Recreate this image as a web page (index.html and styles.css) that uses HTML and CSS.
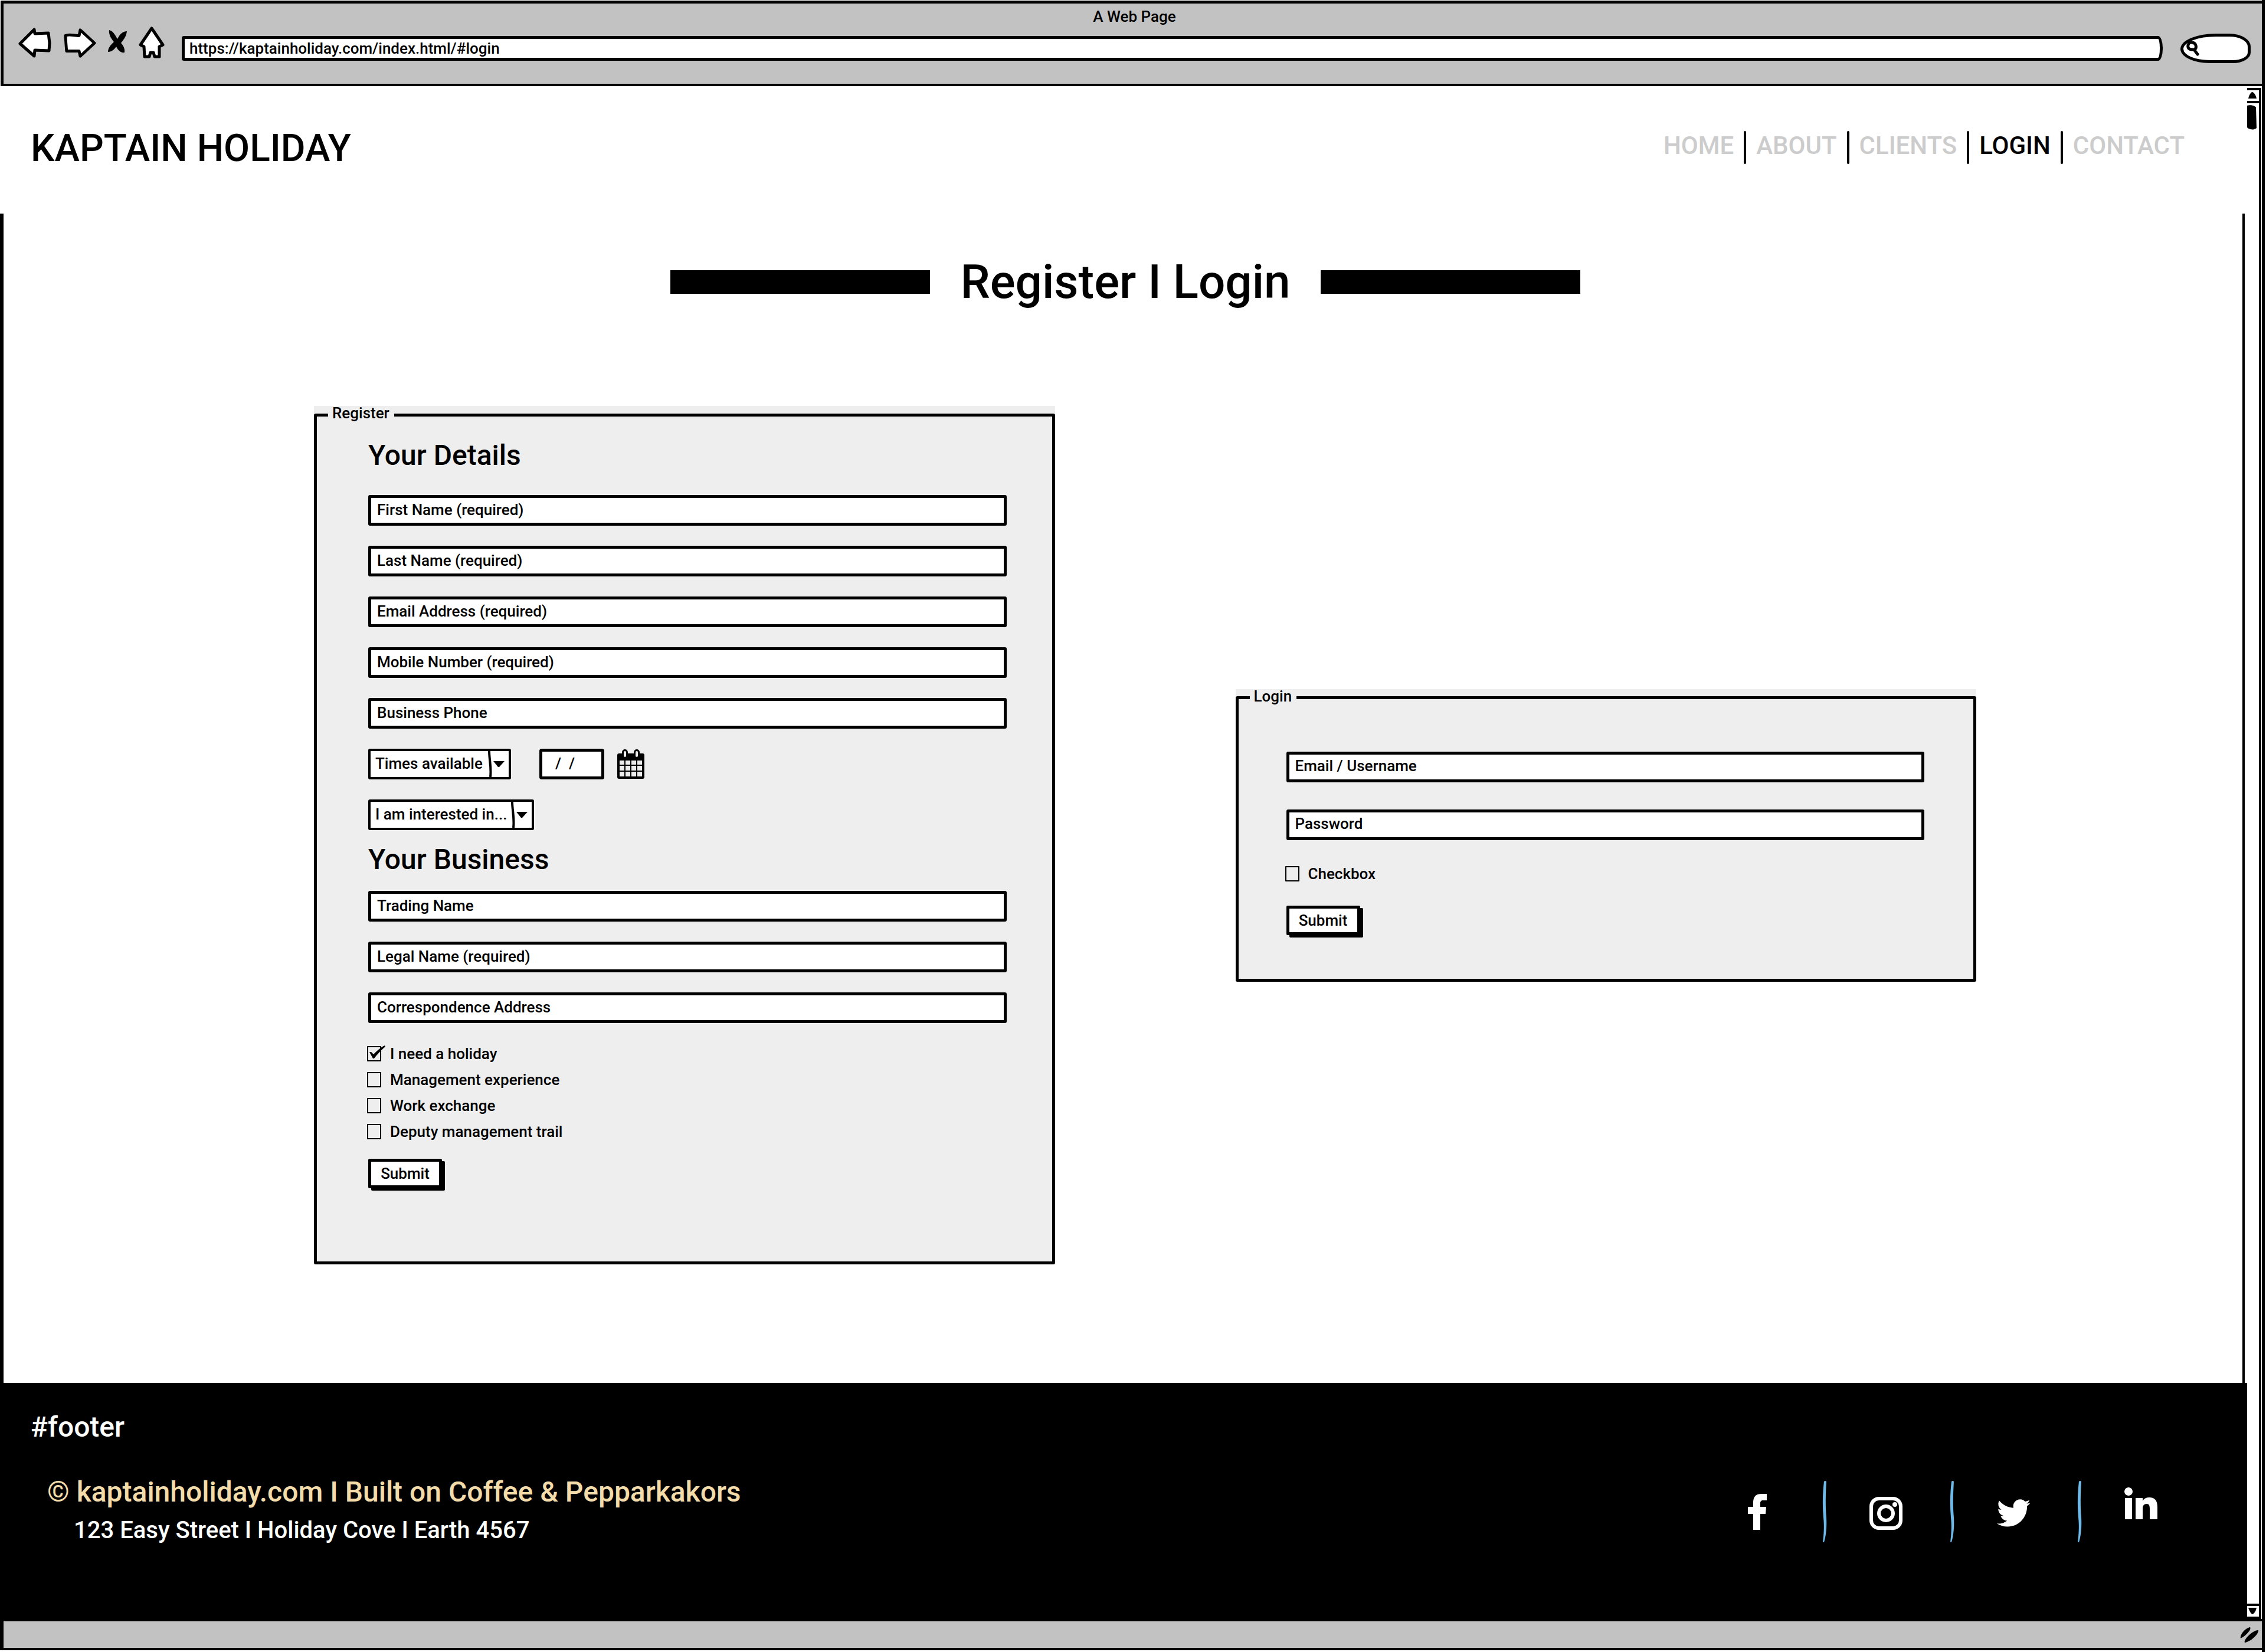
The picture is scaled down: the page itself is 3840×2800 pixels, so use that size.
FILE: index.html
```html
<!DOCTYPE html>
<html lang="en">
<head>
<meta charset="utf-8">
<meta name="viewport" content="width=device-width, initial-scale=1">
<title>Kaptain Holiday - Register | Login</title>
<link rel="stylesheet" href="styles.css">
</head>
<body>
<div class="window">
  <div class="chrome">
    <div class="chrome-title">A Web Page</div>
    <div class="toolbar">
      <div class="tools">
        <button class="tool" type="button" aria-label="Back"><svg width="56" height="56" viewBox="0 0 56 56"><path class="ink-line" d="M3 30 27 6 28 13 51 12 53 29 52 42 28 41 27 51Z"/></svg></button>
        <button class="tool" type="button" aria-label="Forward"><svg width="56" height="56" viewBox="0 0 58 56"><path class="ink-line" d="M4 16C12 12 20 17 28 16L30 6 55 29 30 52 28 43 6 43 5 30Z"/></svg></button>
        <button class="tool" type="button" aria-label="Stop"><svg width="32" height="56" viewBox="0 0 32 56"><path d="M2 7C8 8 12 15 16 22 20 14 25 9 32 9 31 18 26 24 22 29 26 33 29 39 28 45 21 46 17 41 14 35 10 41 5 44 0 44 0 36 6 31 10 27 5 21 1 14 2 7Z"/></svg></button>
        <button class="tool" type="button" aria-label="Home"><svg width="44" height="56" viewBox="0 0 44 56"><path class="ink-line" d="M22 4 41 32 35 35 35 52 27 52 25 45 20 45 18 52 10 52 9 35 3 32Z"/></svg></button>
      </div>
      <input class="address" type="text" aria-label="Address" value="https://kaptainholiday.com/index.html/#login">
      <label class="search">
        <svg width="22" height="26" viewBox="0 0 22 26"><path d="M10 3C5 2 2 6 3 11 4 15 8 15 14 15 18 12 17 4 10 3ZM13 15 19 23" fill="none" stroke="#000" stroke-width="5" stroke-linecap="round"/></svg>
        <input type="search" aria-label="Search">
      </label>
    </div>
  </div>

  <div class="viewport">
    <div class="page">
      <header class="site-header">
        <div class="logo">KAPTAIN HOLIDAY</div>
        <nav class="site-nav">
          <a href="#home">HOME</a><span class="bar"></span>
          <a href="#about">ABOUT</a><span class="bar"></span>
          <a href="#clients">CLIENTS</a><span class="bar"></span>
          <a class="current" href="#login">LOGIN</a><span class="bar"></span>
          <a href="#contact">CONTACT</a>
        </nav>
      </header>

      <main class="content">
        <h1 class="headline">Register I Login</h1>

        <div class="forms">
          <form class="panel">
            <fieldset>
              <legend>Register</legend>
              <div class="panel-body">
                <h2>Your Details</h2>
                <div class="fields">
                  <input class="field" type="text" aria-label="First Name" placeholder="First Name (required)">
                  <input class="field" type="text" aria-label="Last Name" placeholder="Last Name (required)">
                  <input class="field" type="email" aria-label="Email Address" placeholder="Email Address (required)">
                  <input class="field" type="tel" aria-label="Mobile Number" placeholder="Mobile Number (required)">
                  <input class="field" type="tel" aria-label="Business Phone" placeholder="Business Phone">
                  <div class="when">
                    <div class="choice choice-times">
                      <select aria-label="Times available"><option>Times available</option></select>
                      <svg width="38" height="44" viewBox="0 0 38 44"><path d="M5 0C5 14 9 28 7 44" fill="none" stroke="#000" stroke-width="4"/><path d="M12 17H31L22 27H20Z"/></svg>
                    </div>
                    <input class="date" type="text" aria-label="Date" value="/ &nbsp;/">
                    <button class="calendar" type="button" aria-label="Open calendar"><svg width="46" height="50" viewBox="0 0 46 50"><rect y="7" width="46" height="43" rx="3"/><path d="M4 19H12V26H4ZM14 19H22V26H14ZM24 19H32V26H24ZM34 19H42V26H34ZM4 28H12V36H4ZM14 28H22V36H14ZM24 28H32V36H24ZM34 28H42V36H34ZM4 38H12V46H4ZM14 38H22V46H14ZM24 38H32V46H24ZM34 38H42V46H34Z" fill="#eee"/><path d="M13 5V10M33 5V10" stroke="#000" stroke-width="10" stroke-linecap="round"/><path d="M13 5V11M33 5V11" stroke="#eee" stroke-width="4" stroke-linecap="round"/></svg></button>
                  </div>
                  <div class="choice choice-interest">
                    <select aria-label="I am interested in"><option>I am interested in...</option></select>
                    <svg width="38" height="44" viewBox="0 0 38 44"><path d="M5 0C5 14 9 28 7 44" fill="none" stroke="#000" stroke-width="4"/><path d="M12 17H31L22 27H20Z"/></svg>
                  </div>
                </div>
                <h2 class="second">Your Business</h2>
                <div class="fields">
                  <input class="field" type="text" aria-label="Trading Name" placeholder="Trading Name">
                  <input class="field" type="text" aria-label="Legal Name" placeholder="Legal Name (required)">
                  <input class="field" type="text" aria-label="Correspondence Address" placeholder="Correspondence Address">
                </div>
                <div class="checks">
                  <label class="check"><input type="checkbox" checked><svg class="tick" width="32" height="26" viewBox="0 0 32 26"><path d="M4 11 7 11 11 15C16 10 23 3 30 0L31 2C25 7 18 14 12 22L10 22Z"/></svg>I need a holiday</label>
                  <label class="check"><input type="checkbox">Management experience</label>
                  <label class="check"><input type="checkbox">Work exchange</label>
                  <label class="check"><input type="checkbox">Deputy management trail</label>
                </div>
                <button class="submit" type="button">Submit</button>
              </div>
            </fieldset>
          </form>

          <form class="panel panel-login">
            <fieldset>
              <legend>Login</legend>
              <div class="panel-body">
                <div class="fields">
                  <input class="field" type="text" aria-label="Email or username" placeholder="Email / Username">
                  <input class="field" type="password" aria-label="Password" placeholder="Password">
                </div>
                <div class="checks">
                  <label class="check"><input type="checkbox">Checkbox</label>
                </div>
                <button class="submit" type="button">Submit</button>
              </div>
            </fieldset>
          </form>
        </div>
      </main>

      <footer class="site-footer">
        <div class="about">
          <div class="anchor">#footer</div>
          <div class="copyright">© kaptainholiday.com I Built on Coffee &amp; Pepparkakors</div>
          <address>123 Easy Street I Holiday Cove I Earth 4567</address>
        </div>
        <div class="social">
          <a href="#facebook" aria-label="Facebook"><svg width="56" height="105" viewBox="0 0 56 105"><path d="M19 83V56H10V44H19V37C19 26 24 22 33 22H42V33H36C32 33 31 35 31 38V44H41L40 56H31V83Z"/></svg></a>
          <svg class="wave" width="8" height="105" viewBox="0 0 8 105"><path d="M3 1Q5-1 7 1C6 18 5 40 7 62 8 80 6 95 3 104L1 104C2 95 4 80 2 62 0 40 1 18 3 1Z"/></svg>
          <a href="#instagram" aria-label="Instagram"><svg width="56" height="105" viewBox="0 0 56 105"><g fill="none" stroke="#fff" stroke-width="6"><rect x="3" y="30" width="50" height="50" rx="13"/><circle cx="28" cy="55" r="12"/></g><circle cx="43" cy="40" r="4"/></svg></a>
          <svg class="wave" width="8" height="105" viewBox="0 0 8 105"><path d="M3 1Q5-1 7 1C6 18 5 40 7 62 8 80 6 95 3 104L1 104C2 95 4 80 2 62 0 40 1 18 3 1Z"/></svg>
          <a href="#twitter" aria-label="Twitter"><svg width="56" height="105" viewBox="0 0 56 105"><path transform="translate(0 26) scale(.111)" d="M459.37 151.716c.325 4.548.325 9.097.325 13.645 0 138.72-105.583 298.558-298.558 298.558-59.452 0-114.68-17.219-161.137-47.106 8.447.974 16.568 1.299 25.34 1.299 49.055 0 94.213-16.568 130.274-44.832-46.132-.975-84.792-31.188-98.112-72.772 6.498.974 12.995 1.624 19.818 1.624 9.421 0 18.843-1.3 27.614-3.573-48.081-9.747-84.143-51.98-84.143-102.985v-1.299c13.969 7.797 30.214 12.67 47.431 13.319-28.264-18.843-46.781-51.005-46.781-87.391 0-19.492 5.197-37.36 14.294-52.954 51.655 63.675 129.3 105.258 216.365 109.807-1.624-7.797-2.599-15.918-2.599-24.04 0-57.828 46.782-104.934 104.934-104.934 30.213 0 57.502 12.67 76.67 33.137 23.715-4.548 46.456-13.32 66.599-25.34-7.798 24.366-24.366 44.833-46.132 57.827 21.117-2.273 41.584-8.122 60.426-16.243-14.292 20.791-32.161 39.308-52.628 54.253z"/></svg></a>
          <svg class="wave" width="8" height="105" viewBox="0 0 8 105"><path d="M3 1Q5-1 7 1C6 18 5 40 7 62 8 80 6 95 3 104L1 104C2 95 4 80 2 62 0 40 1 18 3 1Z"/></svg>
          <a href="#linkedin" aria-label="LinkedIn"><svg width="56" height="105" viewBox="0 0 56 105"><circle cx="7" cy="18" r="7"/><path d="M1 29H13V65H1ZM19 29H31V34C33 30 37 28 42 28 53 28 56 35 56 45V65H43V47C43 42 42 39 38 39 33 39 31 42 31 47V65H19Z"/></svg></a>
        </div>
      </footer>
    </div>

    <div class="scrollbar" aria-hidden="true">
      <div class="scroll-step"><svg width="16" height="14" viewBox="0 0 16 14"><path d="M2 12C3 7 6 1 9 1 12 2 15 7 16 12Z"/></svg></div>
      <svg class="thumb" width="16" height="42" viewBox="0 0 16 42"><path d="M0 1C6-1 13 1 15 4L16 39C11 43 4 42 0 38Z"/></svg>
      <div class="scroll-step scroll-down"><svg width="16" height="14" viewBox="0 0 16 14"><path d="M2 1H16C15 6 12 11 9 12 6 11 4 6 2 1Z"/></svg></div>
    </div>
  </div>

  <div class="status">
    <svg width="34" height="28" viewBox="0 0 34 28"><path d="M2 20C0 14 10 2 18 1 21 5 10 16 2 20ZM9 27C6 22 24 5 32 6 33 13 18 26 9 27Z"/></svg>
  </div>
</div>
</body>
</html>
```
FILE: styles.css
```css
* { box-sizing: border-box; }

body {
  margin: 0;
  background: #fff;
  color: #000;
  font: 500 26px/32px Roboto, "Liberation Sans", sans-serif;
}

input, select, button { font: inherit; color: inherit; margin: 0; }
button { cursor: pointer; }
a { color: inherit; text-decoration: none; }
svg { display: block; }

/* Browser frame */
.window {
  display: flex;
  flex-direction: column;
  min-height: 100vh;
  padding: 1px 0 3px;
  margin-right: 2px;
  border-right: 5px solid #000;
}

.chrome {
  background: #c2c2c2;
  border: solid #000;
  border-width: 5px 0 4px 5px;
  margin-left: 1px;
  padding: 6px 19px 35px 25px;
}

.chrome-title { text-align: center; }

.toolbar {
  display: flex;
  align-items: flex-end;
  height: 63px;
}

.tools { display: flex; gap: 20px; align-self: flex-start; }
.tool { padding: 0; border: 0; background: none; }
.ink-line { fill: #fff; stroke: #000; stroke-width: 5; stroke-linejoin: round; }

.address {
  flex: 1;
  min-width: 0;
  height: 42px;
  margin: 0 30px 4px 29px;
  padding: 0 8px;
  background: #fff;
  border: 5px solid #000;
  border-radius: 4px 8px 8px 4px / 4px 20px 20px 4px;
}

.search {
  display: flex;
  align-items: center;
  width: 119px;
  height: 50px;
  padding: 0 5px;
  background: #fff;
  border: 5px solid #000;
  border-radius: 60px 36px 30px 50px / 26px 22px 18px 24px;
}
.search input { flex: 1; min-width: 0; border: 0; padding: 0; background: none; outline: 0; }

.viewport { flex: 1; display: flex; }
.page { flex: 1; min-width: 0; display: flex; flex-direction: column; }

/* Header */
.site-header {
  display: flex;
  justify-content: space-between;
  align-items: flex-start;
  height: 216px;
  padding: 66px 106px 0 52px;
}
.logo { font-size: 64px; line-height: 80px; }

.site-nav {
  display: flex;
  gap: 17px;
  padding-top: 10px;
  font-size: 42px;
  line-height: 50px;
  color: #ccc;
}
.site-nav .current { color: #000; }
.bar { width: 4px; height: 56px; background: #000; border-radius: 2px; }

/* Main */
.content {
  flex: 1;
  margin-right: 4px;
  padding: 68px 0 201px;
  border: solid #000;
  border-width: 0 4px 0 6px;
}

.headline {
  display: flex;
  justify-content: center;
  align-items: center;
  gap: 51px;
  margin: 0 0 162px;
  padding-left: 8px;
  font-size: 80px;
  font-weight: 500;
  line-height: 96px;
}
.headline::before, .headline::after {
  content: "";
  width: 440px;
  height: 40px;
  background: #000;
}

.forms {
  display: grid;
  grid-template-columns: 1fr 1fr;
  align-items: center;
  gap: 306px;
  padding: 0 451px 0 526px;
}

.panel { background: #eee; --left: 68px; --right: 77px; }

fieldset {
  min-width: 0;
  margin: 0;
  padding: 0 0 0 19px;
  border: 5px solid #000;
  border-radius: 3px;
}
legend { padding: 0 8px 6px 7px; line-height: 24px; }

.panel-body { padding: 26px var(--right) 124px var(--left); }

h2 { margin: 0 0 39px; font-size: 48px; font-weight: 500; line-height: 56px; }
h2.second { margin: 22px 0 25px; }

.fields { display: flex; flex-direction: column; gap: 34px; }

.field, .date, .choice {
  height: 52px;
  background: #fff;
  border: 5px solid #000;
  border-radius: 3px;
}
.field { width: 100%; padding: 0 10px 3px; }
.field::placeholder { color: #000; opacity: 1; }

.when { display: flex; }
.choice { display: grid; border-width: 4px; }
.choice select {
  grid-area: 1 / 1;
  appearance: none;
  padding: 0 8px 3px;
  border: 0;
  background: none;
}
.choice svg { grid-area: 1 / 1; justify-self: end; pointer-events: none; }
.choice-times { width: 242px; margin-right: 48px; }
.choice-interest { width: 281px; }
.date { width: 110px; padding: 0 22px 3px; border-radius: 4px; }
.calendar { margin-left: 22px; padding: 0; border: 0; background: none; }

.checks { margin: 30px 0 24px -2px; }
.check { position: relative; display: flex; align-items: center; gap: 15px; height: 44px; }
.check input {
  appearance: none;
  width: 24px;
  height: 26px;
  border: 2px solid #000;
  border-radius: 1px;
}
/* The tick runs past the edge of its box */
.tick { position: absolute; left: 0; top: 8px; pointer-events: none; }

.submit {
  display: block;
  width: 125px;
  height: 50px;
  padding: 0;
  background: #fff;
  border: 5px solid #000;
  border-radius: 2px;
  box-shadow: 5px 4px 0 #000;
}

.panel-login { --left: 62px; --right: 83px; }
.panel-login .panel-body { padding-top: 76px; padding-bottom: 74px; }
.panel-login .fields { gap: 46px; }
.panel-login .checks { margin-top: 35px; margin-bottom: 32px; }

/* Footer */
.site-footer {
  display: flex;
  justify-content: space-between;
  padding: 47px 152px 126px 52px;
  background: #000;
  color: #fff;
}
.anchor { font-size: 48px; line-height: 56px; }
.copyright { margin: 54px 0 13px 28px; font-size: 48px; line-height: 56px; color: #f3dcaa; }
address { padding-left: 73px; font-size: 40px; font-style: normal; line-height: 48px; }

.social { display: flex; gap: 76px; padding-top: 119px; fill: #fff; }
.wave { margin: 0 -4px 0 4px; fill: #6db9e8; }

/* Scrollbar */
.scrollbar {
  display: flex;
  flex-direction: column;
  width: 24px;
  margin: 3px 1px 0 0;
  border-right: 4px solid #000;
}
.scroll-step { border: solid #000; border-width: 4px 0; padding: 2px 0; }
.thumb { margin-top: 3px; }
.scroll-down { margin-top: auto; }

/* Status bar */
.status {
  display: flex;
  justify-content: flex-end;
  align-items: center;
  height: 53px;
  padding-right: 4px;
  background: #c2c2c2;
  border: solid #000;
  border-width: 4px 0 4px 6px;
}

@media (max-width: 2400px) {
  .forms { grid-template-columns: 1fr; gap: 80px; padding: 0 5%; }
  .site-header { height: auto; flex-wrap: wrap; }
  .site-footer { flex-wrap: wrap; }
}
```
